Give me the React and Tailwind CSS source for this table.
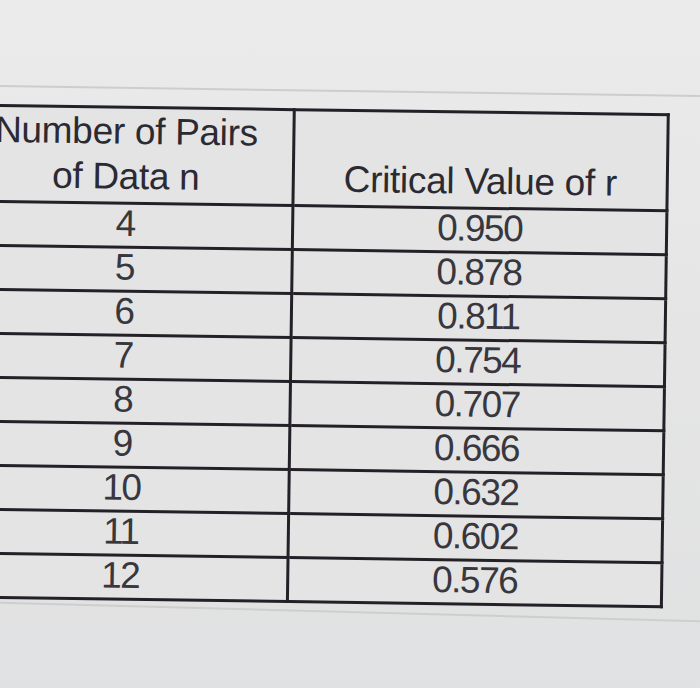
import React from "react";

const rows = [
  ["4", "0.950"],
  ["5", "0.878"],
  ["6", "0.811"],
  ["7", "0.754"],
  ["8", "0.707"],
  ["9", "0.666"],
  ["10", "0.632"],
  ["11", "0.602"],
  ["12", "0.576"],
];

function App() {
  return (
    <div className="w-[700px] h-[688px] overflow-hidden bg-gradient-to-b from-[#ebebeb] via-[#e5e5e5] to-[#e0e1e2] font-['Liberation_Sans',Arial,sans-serif]">
      <div className="h-[90px]" />
      <div className="h-[2px] bg-[#cdcdcd] rotate-[0.8deg]" />
      <div className="pt-[12px] rotate-[0.8deg] origin-top-left">
        <table className="ml-[-42px] border-collapse bg-[#e4e4e4] text-[#2b2a33]">
          <thead>
            <tr className="h-[89px]">
              <th className="w-[335px] border-[3px] border-[#232027] align-bottom pb-[3px] text-[37px] font-normal leading-[45px] tracking-[-0.3px]">
                Number of Pairs
                <br />
                of Data n
              </th>
              <th className="w-[374px] border-[3px] border-[#232027] align-bottom pb-[3px] text-[37px] font-normal leading-[45px] tracking-[-0.3px]">
                Critical Value of r
              </th>
            </tr>
          </thead>
          <tbody className="text-[#38373e]">
            {rows.map(([n, r]) => (
              <tr key={n} className="h-[41px]">
                <td className="border-[3px] border-[#232027] text-center text-[37px] leading-[38px] tracking-[-1.5px] pb-[3px]">
                  {n}
                </td>
                <td className="border-[3px] border-[#232027] text-center text-[37px] leading-[38px] tracking-[-1.5px] pb-[3px]">
                  {r}
                </td>
              </tr>
            ))}
          </tbody>
        </table>
      </div>
      <div className="mt-[12px] h-[2px] bg-[#cdcecf] rotate-[1.5deg]" />
    </div>
  );
}

export default App;
